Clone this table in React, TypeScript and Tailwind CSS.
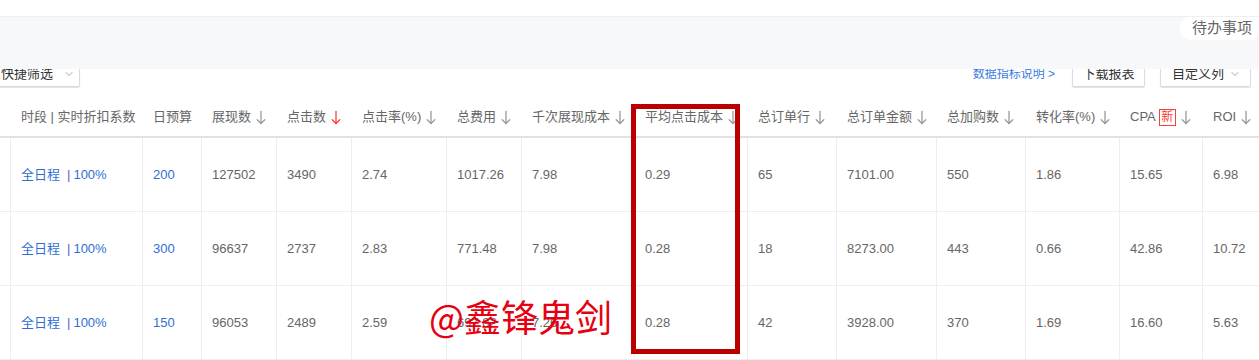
import { ChevronDown } from 'lucide-react';

const font = { fontFamily: '"Liberation Sans", "Noto Sans CJK SC", sans-serif' };

const widths = [11, 132, 59, 75, 75, 95, 75, 113, 113, 89, 100, 89, 94, 83, 60];

type Col = { label: string; sort?: boolean; red?: boolean; badge?: boolean };

const columns: Col[] = [
    { label: '' },
    { label: '时段 | 实时折扣系数' },
    { label: '日预算' },
    { label: '展现数', sort: true },
    { label: '点击数', sort: true, red: true },
    { label: '点击率(%)', sort: true },
    { label: '总费用', sort: true },
    { label: '千次展现成本', sort: true },
    { label: '平均点击成本', sort: true },
    { label: '总订单行', sort: true },
    { label: '总订单金额', sort: true },
    { label: '总加购数', sort: true },
    { label: '转化率(%)', sort: true },
    { label: 'CPA', sort: true, badge: true },
    { label: 'ROI', sort: true },
];

const rows = [
    ['200', '127502', '3490', '2.74', '1017.26', '7.98', '0.29', '65', '7101.00', '550', '1.86', '15.65', '6.98'],
    ['300', '96637', '2737', '2.83', '771.48', '7.98', '0.28', '18', '8273.00', '443', '0.66', '42.86', '10.72'],
    ['150', '96053', '2489', '2.59', '697.82', '7.26', '0.28', '42', '3928.00', '370', '1.69', '16.60', '5.63'],
];

function SortArrow({ red }: { red?: boolean }) {
    return (
        <svg width="10" height="15" viewBox="0 0 10 15" className="ml-[5px]">
            <g fill="none" stroke={red ? '#f5403c' : '#9a9a9a'} strokeWidth="1.3" strokeLinecap="round" strokeLinejoin="round">
                <path d="M5 1.5 V13.5" />
                <path d="M1.2 9.7 L5 13.5 L8.8 9.7" />
            </g>
        </svg>
    );
}

export default function App() {
    return (
        <div className="relative w-[1259px] h-[360px] overflow-hidden bg-white" style={font}>
            {/* top strip */}
            <div className="h-[17px] bg-white border-b border-[#eeeff1]" />
            <div className="h-[52px] bg-[#f7f8fa] flex justify-end items-start">
                <div className="h-[23px] w-[79px] bg-white rounded-l-[10px] rounded-br-[10px] flex items-center pl-[12px] text-[15px] text-[#666]">
                    待办事项
                </div>
            </div>

            <div className="h-[19px] overflow-hidden flex items-end">
                <div className="flex items-center w-full h-[28px] pb-[1px]">
                    <div className="h-[27px] w-[82px] -ml-[2px] flex items-center gap-[10px] pl-[2px] border border-[#dcdcdc] rounded-[2px] shadow-[0_1px_1px_rgba(0,0,0,0.12)] text-[13px] text-[#333]">
                        快捷筛选
                        <ChevronDown className="w-[12px] h-[12px] text-[#888]" strokeWidth={1.5} />
                    </div>
                    <div className="ml-auto text-[12px] text-[#3d7be0] pr-[17px]">数据指标说明 &gt;</div>
                    <div className="h-[27px] w-[73px] flex items-center justify-center border border-[#dcdcdc] rounded-[2px] shadow-[0_1px_1px_rgba(0,0,0,0.12)] text-[13px] text-[#333]">
                        下载报表
                    </div>
                    <div className="ml-[15px] mr-[8px] h-[27px] w-[91px] flex items-center justify-between pl-[11px] pr-[9px] border border-[#dcdcdc] rounded-[2px] shadow-[0_1px_1px_rgba(0,0,0,0.12)] text-[13px] text-[#333]">
                        自定义列
                        <ChevronDown className="w-[12px] h-[12px] text-[#888]" strokeWidth={1.5} />
                    </div>
                </div>
            </div>

            {/* table */}
            <div className="mt-[10px]">
                <div className="flex h-[40px] border-b-2 border-[#e2e2e2]">
                    {columns.map((c, i) => (
                        <div
                            key={i}
                            style={{ width: widths[i] }}
                            className="shrink-0 flex items-center pl-[10px] text-[13px] text-[#666] whitespace-nowrap"
                        >
                            {c.label}
                            {c.badge && (
                                <span className="ml-[3px] h-[17px] w-[17px] flex items-center justify-center border border-[#f5403c] text-[#f5403c] text-[12px] leading-none">
                                    新
                                </span>
                            )}
                            {c.sort && <SortArrow red={c.red} />}
                        </div>
                    ))}
                </div>
                {rows.map((r, ri) => (
                    <div key={ri} className="flex h-[74px] border-b border-[#eeeeee]">
                        <div style={{ width: widths[0] }} className="shrink-0 border-r border-[#eeeeee]" />
                        <div style={{ width: widths[1] }} className="shrink-0 flex items-center pl-[10px] border-r border-[#eeeeee] text-[13px] text-[#2f6fd3] whitespace-nowrap">
                            全日程<span className="ml-[7px] mr-[3px] text-[#5a5fd0]">|</span>100%
                        </div>
                        {r.map((v, ci) => (
                            <div
                                key={ci}
                                style={{ width: widths[ci + 2] }}
                                className={`shrink-0 flex items-center pl-[10px] border-r border-[#eeeeee] text-[13px] ${ci === 0 ? 'text-[#2f6fd3]' : 'text-[#666]'}`}
                            >
                                {v}
                            </div>
                        ))}
                    </div>
                ))}
            </div>

            {/* highlight box */}
            <div className="absolute left-[631px] top-[104px] w-[109px] h-[250px] border-[5px] border-[#bb0000]" />

            {/* watermark */}
            <div
                className="absolute left-[429px] top-[298px] text-[37px] leading-none text-[#e60012]"
                style={{ fontFamily: '"Noto Sans CJK SC", sans-serif' }}
            >
                @鑫锋鬼剑
            </div>
        </div>
    );
}
